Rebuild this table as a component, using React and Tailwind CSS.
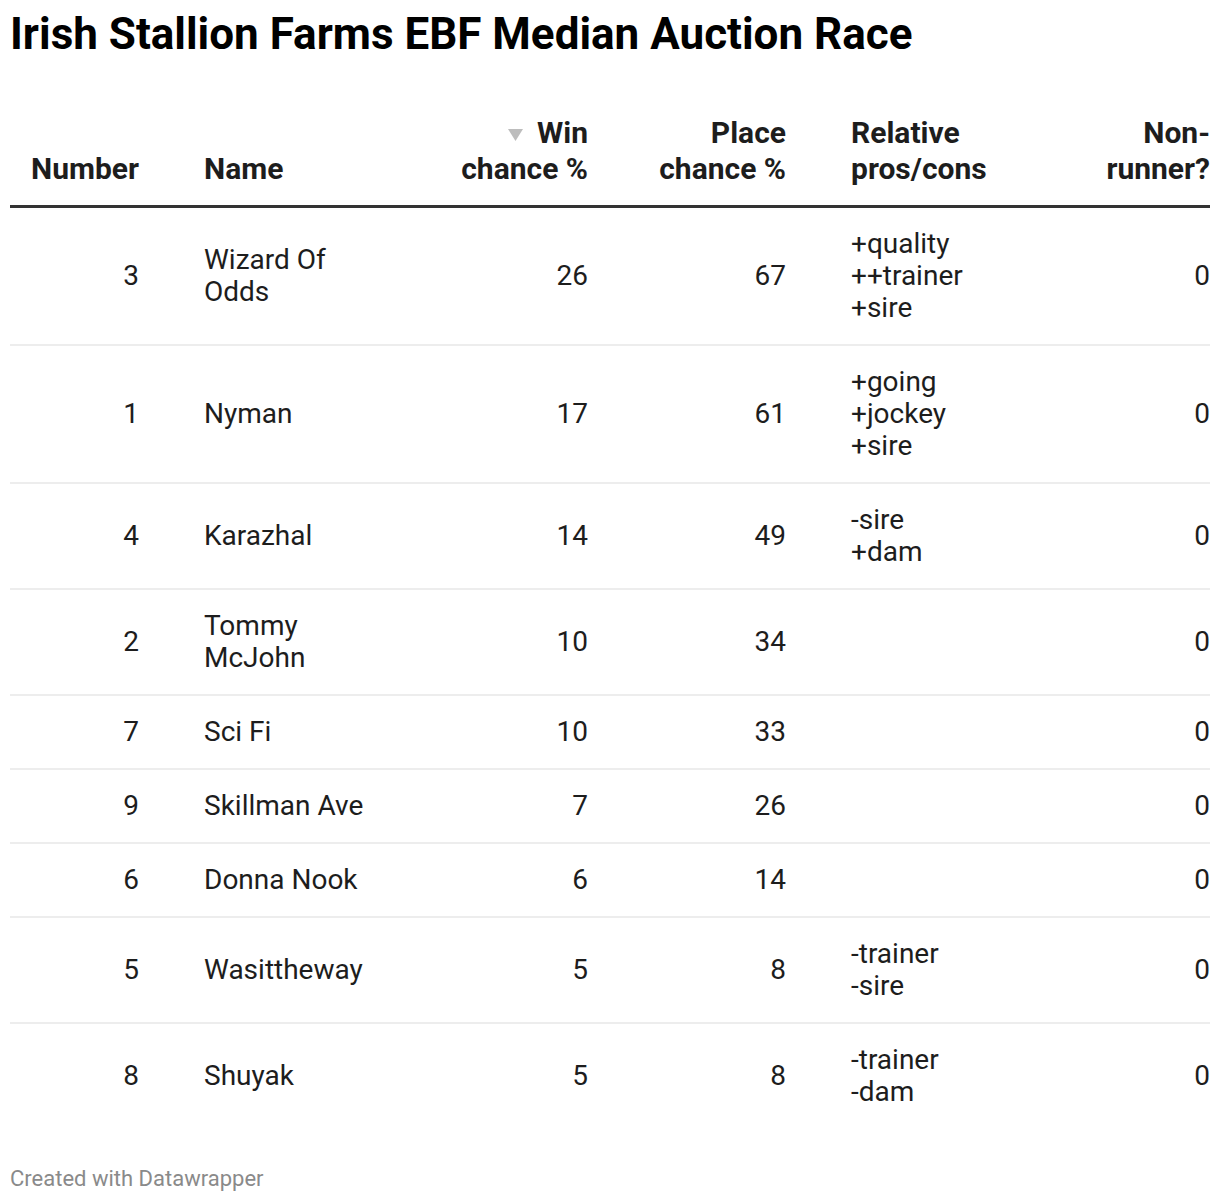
import React from 'react'

const rows = [
  { num: 3, name: 'Wizard Of Odds', win: 26, place: 67, notes: ['+quality', '++trainer', '+sire'], nr: 0 },
  { num: 1, name: 'Nyman', win: 17, place: 61, notes: ['+going', '+jockey', '+sire'], nr: 0 },
  { num: 4, name: 'Karazhal', win: 14, place: 49, notes: ['-sire', '+dam'], nr: 0 },
  { num: 2, name: 'Tommy McJohn', win: 10, place: 34, notes: [], nr: 0 },
  { num: 7, name: 'Sci Fi', win: 10, place: 33, notes: [], nr: 0 },
  { num: 9, name: 'Skillman Ave', win: 7, place: 26, notes: [], nr: 0 },
  { num: 6, name: 'Donna Nook', win: 6, place: 14, notes: [], nr: 0 },
  { num: 5, name: 'Wasittheway', win: 5, place: 8, notes: ['-trainer', '-sire'], nr: 0 },
  { num: 8, name: 'Shuyak', win: 5, place: 8, notes: ['-trainer', '-dam'], nr: 0 },
]

export default function App() {
  return (
    <div className="bg-white px-[10px] text-[#1d1d1d] font-['Roboto',sans-serif] min-h-[1204px]">
      <h1 className="pt-[8px] text-[44px] leading-[52px] font-bold text-black">
        Irish Stallion Farms EBF Median Auction Race
      </h1>

      <div className="mt-[55px]">
        {/* header */}
        <div className="flex items-end border-b-[3px] border-[#333] pb-[18px] text-[30px] leading-[36px] font-bold">
          <div className="w-[129px] text-right">Number</div>
          <div className="ml-[65px] w-[165px]">Name</div>
          <div className="w-[219px] text-right">
            <svg width="15" height="12" viewBox="0 0 15 12" className="inline-block mr-[14px] align-[2px]">
              <path d="M0 0H15L7.5 12Z" fill="#bdbdbd" />
            </svg>
            Win
            <br />
            chance %
          </div>
          <div className="w-[198px] text-right">
            Place
            <br />
            chance %
          </div>
          <div className="ml-[65px] w-[200px]">
            Relative
            <br />
            pros/cons
          </div>
          <div className="flex-1 text-right">
            Non-
            <br />
            runner?
          </div>
        </div>

        {/* body */}
        {rows.map((r, i) => (
          <div
            key={r.num}
            className={`flex items-center py-[20px] text-[28px] leading-[32px] ${
              i < rows.length - 1 ? 'border-b-2 border-[#ededed]' : ''
            }`}
          >
            <div className="w-[129px] text-right">{r.num}</div>
            <div className="ml-[65px] w-[165px]">{r.name}</div>
            <div className="w-[219px] text-right">{r.win}</div>
            <div className="w-[198px] text-right">{r.place}</div>
            <div className="ml-[65px] w-[200px]">
              {r.notes.map((n) => (
                <div key={n}>{n}</div>
              ))}
            </div>
            <div className="flex-1 text-right">{r.nr}</div>
          </div>
        ))}
      </div>

      <div className="mt-[37px] text-[22px] leading-[28px] text-[#8a8a8a]">Created with Datawrapper</div>
    </div>
  )
}
